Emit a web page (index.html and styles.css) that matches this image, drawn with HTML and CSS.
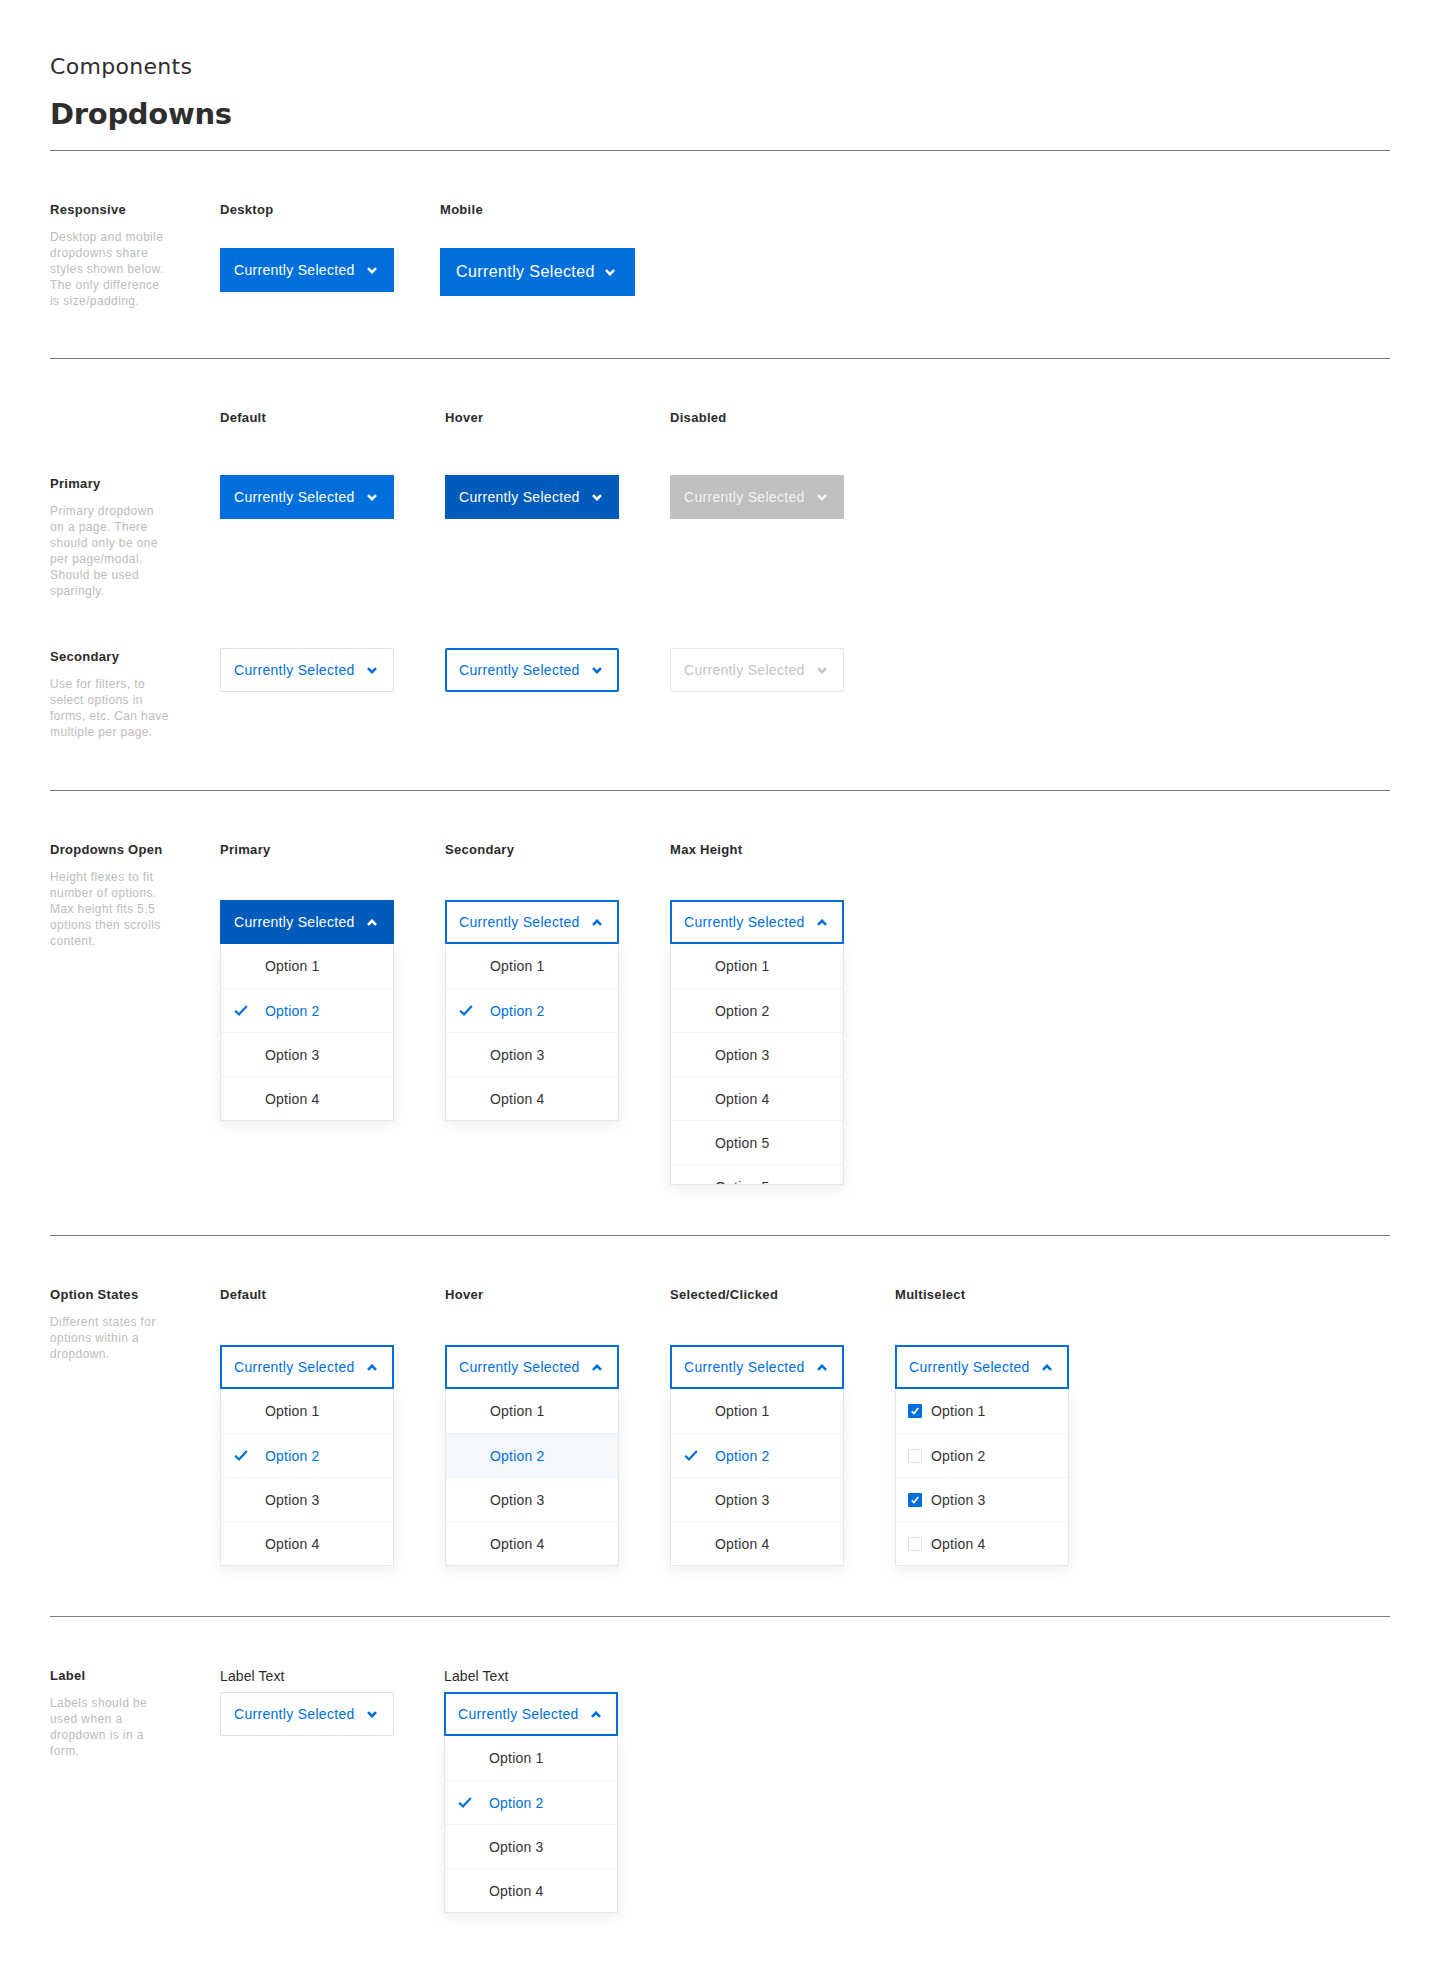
FILE: index.html
```html
<!DOCTYPE html>
<html lang="en">
<head>
<meta charset="utf-8">
<title>Components – Dropdowns</title>
<link rel="stylesheet" href="styles.css">
</head>
<body>
<svg width="0" height="0" class="defs" aria-hidden="true">
  <defs>
    <symbol id="i-down" viewBox="0 0 10 7"><polyline points="1,1.2 5,5.2 9,1.2"/></symbol>
    <symbol id="i-up" viewBox="0 0 10 7"><polyline points="1,5.8 5,1.8 9,5.8"/></symbol>
    <symbol id="i-check" viewBox="0 0 14 11"><polyline points="1.2,5.8 5,9.4 12.8,1"/></symbol>
    <symbol id="i-box" viewBox="0 0 14 14"><polyline points="3.2,7.4 5.8,10 10.8,3.6"/></symbol>
  </defs>
</svg>
<div class="page">
  <header class="page-header">
    <div class="eyebrow">Components</div>
    <h1 class="title">Dropdowns</h1>
  </header>

  <section class="section section-resp">
    <div class="side">
      <h2 class="side-title">Responsive</h2>
      <p class="side-desc">Desktop and mobile<br>dropdowns share<br>styles shown below.<br>The only difference<br>is size/padding.</p>
    </div>
    <div class="col">
      <h3 class="col-title">Desktop</h3>
      <div class="dd dd-primary gap-md"><span>Currently Selected</span><svg class="chev"><use href="#i-down"/></svg></div>
    </div>
    <div class="col">
      <h3 class="col-title">Mobile</h3>
      <div class="dd dd-primary dd-mobile gap-md"><span>Currently Selected</span><svg class="chev"><use href="#i-down"/></svg></div>
    </div>
  </section>

  <section class="section section-states">
    <div></div>
    <h3 class="col-title">Default</h3>
    <h3 class="col-title">Hover</h3>
    <h3 class="col-title">Disabled</h3>

    <div class="side side-offset">
      <h2 class="side-title">Primary</h2>
      <p class="side-desc">Primary dropdown<br>on a page. There<br>should only be one<br>per page/modal.<br>Should be used<br>sparingly.</p>
    </div>
    <div class="dd dd-primary"><span>Currently Selected</span><svg class="chev"><use href="#i-down"/></svg></div>
    <div class="dd dd-primary is-hover"><span>Currently Selected</span><svg class="chev"><use href="#i-down"/></svg></div>
    <div class="dd dd-primary is-disabled"><span>Currently Selected</span><svg class="chev"><use href="#i-down"/></svg></div>

    <div class="side side-offset">
      <h2 class="side-title">Secondary</h2>
      <p class="side-desc">Use for filters, to<br>select options in<br>forms, etc. Can have<br>multiple per page.</p>
    </div>
    <div class="dd dd-secondary"><span>Currently Selected</span><svg class="chev"><use href="#i-down"/></svg></div>
    <div class="dd dd-secondary is-hover"><span>Currently Selected</span><svg class="chev"><use href="#i-down"/></svg></div>
    <div class="dd dd-secondary is-disabled"><span>Currently Selected</span><svg class="chev"><use href="#i-down"/></svg></div>
  </section>

  <section class="section">
    <div class="side">
      <h2 class="side-title">Dropdowns Open</h2>
      <p class="side-desc">Height flexes to fit<br>number of options.<br>Max height fits 5.5<br>options then scrolls<br>content.</p>
    </div>
    <div class="col">
      <h3 class="col-title">Primary</h3>
      <div class="dd-open gap-lg">
        <div class="dd dd-primary is-open"><span>Currently Selected</span><svg class="chev"><use href="#i-up"/></svg></div>
        <ul class="dd-list">
          <li class="opt"><span class="opt-icon"></span>Option 1</li>
          <li class="opt is-selected"><svg class="opt-icon check"><use href="#i-check"/></svg>Option 2</li>
          <li class="opt"><span class="opt-icon"></span>Option 3</li>
          <li class="opt"><span class="opt-icon"></span>Option 4</li>
        </ul>
      </div>
    </div>
    <div class="col">
      <h3 class="col-title">Secondary</h3>
      <div class="dd-open gap-lg">
        <div class="dd dd-secondary is-open"><span>Currently Selected</span><svg class="chev"><use href="#i-up"/></svg></div>
        <ul class="dd-list">
          <li class="opt"><span class="opt-icon"></span>Option 1</li>
          <li class="opt is-selected"><svg class="opt-icon check"><use href="#i-check"/></svg>Option 2</li>
          <li class="opt"><span class="opt-icon"></span>Option 3</li>
          <li class="opt"><span class="opt-icon"></span>Option 4</li>
        </ul>
      </div>
    </div>
    <div class="col">
      <h3 class="col-title">Max Height</h3>
      <div class="dd-open gap-lg">
        <div class="dd dd-secondary is-open"><span>Currently Selected</span><svg class="chev"><use href="#i-up"/></svg></div>
        <ul class="dd-list dd-list-max">
          <li class="opt"><span class="opt-icon"></span>Option 1</li>
          <li class="opt"><span class="opt-icon"></span>Option 2</li>
          <li class="opt"><span class="opt-icon"></span>Option 3</li>
          <li class="opt"><span class="opt-icon"></span>Option 4</li>
          <li class="opt"><span class="opt-icon"></span>Option 5</li>
          <li class="opt"><span class="opt-icon"></span>Option 5</li>
        </ul>
      </div>
    </div>
  </section>

  <section class="section">
    <div class="side">
      <h2 class="side-title">Option States</h2>
      <p class="side-desc">Different states for<br>options within a<br>dropdown.</p>
    </div>
    <div class="col">
      <h3 class="col-title">Default</h3>
      <div class="dd-open gap-lg">
        <div class="dd dd-secondary is-open"><span>Currently Selected</span><svg class="chev"><use href="#i-up"/></svg></div>
        <ul class="dd-list">
          <li class="opt"><span class="opt-icon"></span>Option 1</li>
          <li class="opt is-selected"><svg class="opt-icon check"><use href="#i-check"/></svg>Option 2</li>
          <li class="opt"><span class="opt-icon"></span>Option 3</li>
          <li class="opt"><span class="opt-icon"></span>Option 4</li>
        </ul>
      </div>
    </div>
    <div class="col">
      <h3 class="col-title">Hover</h3>
      <div class="dd-open gap-lg">
        <div class="dd dd-secondary is-open"><span>Currently Selected</span><svg class="chev"><use href="#i-up"/></svg></div>
        <ul class="dd-list">
          <li class="opt"><span class="opt-icon"></span>Option 1</li>
          <li class="opt is-hover"><span class="opt-icon"></span>Option 2</li>
          <li class="opt"><span class="opt-icon"></span>Option 3</li>
          <li class="opt"><span class="opt-icon"></span>Option 4</li>
        </ul>
      </div>
    </div>
    <div class="col">
      <h3 class="col-title">Selected/Clicked</h3>
      <div class="dd-open gap-lg">
        <div class="dd dd-secondary is-open"><span>Currently Selected</span><svg class="chev"><use href="#i-up"/></svg></div>
        <ul class="dd-list">
          <li class="opt"><span class="opt-icon"></span>Option 1</li>
          <li class="opt is-selected"><svg class="opt-icon check"><use href="#i-check"/></svg>Option 2</li>
          <li class="opt"><span class="opt-icon"></span>Option 3</li>
          <li class="opt"><span class="opt-icon"></span>Option 4</li>
        </ul>
      </div>
    </div>
    <div class="col">
      <h3 class="col-title">Multiselect</h3>
      <div class="dd-open gap-lg">
        <div class="dd dd-secondary is-open"><span>Currently Selected</span><svg class="chev"><use href="#i-up"/></svg></div>
        <ul class="dd-list">
          <li class="opt opt-multi"><span class="cbox is-checked"><svg><use href="#i-box"/></svg></span>Option 1</li>
          <li class="opt opt-multi"><span class="cbox"></span>Option 2</li>
          <li class="opt opt-multi"><span class="cbox is-checked"><svg><use href="#i-box"/></svg></span>Option 3</li>
          <li class="opt opt-multi"><span class="cbox"></span>Option 4</li>
        </ul>
      </div>
    </div>
  </section>

  <section class="section section-label">
    <div class="side">
      <h2 class="side-title">Label</h2>
      <p class="side-desc">Labels should be<br>used when a<br>dropdown is in a<br>form.</p>
    </div>
    <div class="col">
      <label class="col-title col-title-regular">Label Text</label>
      <div class="dd dd-secondary gap-sm"><span>Currently Selected</span><svg class="chev"><use href="#i-down"/></svg></div>
    </div>
    <div class="col">
      <label class="col-title col-title-regular">Label Text</label>
      <div class="dd-open gap-sm">
        <div class="dd dd-secondary is-open"><span>Currently Selected</span><svg class="chev"><use href="#i-up"/></svg></div>
        <ul class="dd-list">
          <li class="opt"><span class="opt-icon"></span>Option 1</li>
          <li class="opt is-selected"><svg class="opt-icon check"><use href="#i-check"/></svg>Option 2</li>
          <li class="opt"><span class="opt-icon"></span>Option 3</li>
          <li class="opt"><span class="opt-icon"></span>Option 4</li>
        </ul>
      </div>
    </div>
  </section>
</div>
</body>
</html>
```

FILE: styles.css
```css
* { box-sizing: border-box; }

body {
  margin: 0;
  background: #ffffff;
  color: #333333;
  font-family: "Liberation Sans", Arial, sans-serif;
}

.defs { position: absolute; width: 0; height: 0; overflow: hidden; }

.page { padding: 0 50px; }

/* Header */
.page-header {
  padding: 54px 0 19px;
  border-bottom: 1px solid #7a7a7a;
}
.eyebrow {
  font-family: "DejaVu Sans", sans-serif;
  font-weight: 400;
  font-size: 22px;
  line-height: 26px;
  letter-spacing: 0.3px;
  color: #2e2e2e;
}
.title {
  margin: 17px 0 0;
  font-family: "DejaVu Sans", sans-serif;
  font-weight: 700;
  font-size: 29px;
  line-height: 34px;
  letter-spacing: -0.3px;
  color: #2e2e2e;
}

/* Sections */
.section {
  display: grid;
  grid-template-columns: 170px repeat(4, 225px);
  align-items: start;
  padding: 51px 0 50px;
  border-bottom: 1px solid #7a7a7a;
}
.section:last-child { border-bottom: none; padding-bottom: 50px; }
.section-resp { grid-template-columns: 170px 220px 220px; padding-bottom: 49px; }
.section-label { grid-template-columns: 170px 224px 224px; }
.section-states {
  grid-template-columns: 170px repeat(3, 225px);
  row-gap: 49px;
}
.side-offset { padding-top: 1px; }

.side-title,
.col-title {
  display: block;
  margin: 0;
  font-size: 13px;
  line-height: 16px;
  font-weight: 700;
  letter-spacing: 0.3px;
  color: #2b2b2b;
}
.col-title-regular {
  font-weight: 400;
  font-size: 14px;
  letter-spacing: 0.1px;
}
.side-desc {
  margin: 11px 0 0;
  font-size: 12px;
  line-height: 16px;
  letter-spacing: 0.4px;
  color: #bcbcbc;
  white-space: nowrap;
}

.col { display: flex; flex-direction: column; align-items: flex-start; }
.gap-sm { margin-top: 8px; }
.gap-md { margin-top: 30px; }
.gap-lg { margin-top: 42px; }

/* Dropdown trigger */
.dd {
  display: flex;
  align-items: center;
  justify-content: space-between;
  width: 174px;
  height: 44px;
  padding: 0 17px 0 14px;
  font-size: 14px;
  letter-spacing: 0.3px;
  white-space: nowrap;
}
.chev {
  flex: none;
  width: 10px;
  height: 7px;
  fill: none;
  stroke: currentColor;
  stroke-width: 2.6;
}

.dd-primary { background: #006fdc; color: #ffffff; }
.dd-primary.is-hover,
.dd-primary.is-open { background: #005bbb; }
.dd-primary.is-disabled { background: #bfbfbf; color: #f3f3f3; }

.dd-secondary {
  background: #ffffff;
  color: #006fdc;
  border-radius: 2px;
  box-shadow: inset 0 0 0 1px #e0e0e0;
}
.dd-secondary.is-hover,
.dd-secondary.is-open { box-shadow: inset 0 0 0 2px #006fdc; }
.dd-secondary.is-disabled { color: #c4c4c4; box-shadow: inset 0 0 0 1px #e6e6e6; }

.dd-mobile {
  width: 195px;
  height: 48px;
  padding: 0 20px 0 16px;
  font-size: 16px;
  letter-spacing: 0.4px;
}

/* Open dropdown */
.dd-open { width: 174px; }
.dd-open .dd { border-radius: 0; }
.dd-list {
  margin: 0;
  padding: 0;
  list-style: none;
  background: #ffffff;
  border: 1px solid #e6e6e6;
  border-top: none;
  box-shadow: 0 4px 12px rgba(0, 0, 0, 0.07);
}
.dd-list-max { max-height: 241px; overflow: hidden; }

.opt {
  display: flex;
  align-items: center;
  height: 44px;
  padding-left: 13px;
  border-top: 1px solid #f2f2f2;
  font-size: 14px;
  letter-spacing: 0.2px;
  color: #333333;
  white-space: nowrap;
}
.opt:first-child { border-top: none; }
.opt-icon {
  flex: none;
  width: 14px;
  height: 11px;
  margin-right: 17px;
}
.check {
  fill: none;
  stroke: #006fdc;
  stroke-width: 2.2;
}
.opt.is-selected { color: #006fdc; }
.opt.is-hover { color: #006fdc; background: #f4f7fb; }

.opt-multi { padding-left: 12px; }
.cbox {
  flex: none;
  display: flex;
  width: 14px;
  height: 14px;
  margin-right: 9px;
  border: 1px solid #e2e2e2;
  border-radius: 1px;
  background: #ffffff;
}
.cbox.is-checked { background: #006fdc; border-color: #006fdc; }
.cbox svg {
  width: 12px;
  height: 12px;
  fill: none;
  stroke: #ffffff;
  stroke-width: 2;
}
```
